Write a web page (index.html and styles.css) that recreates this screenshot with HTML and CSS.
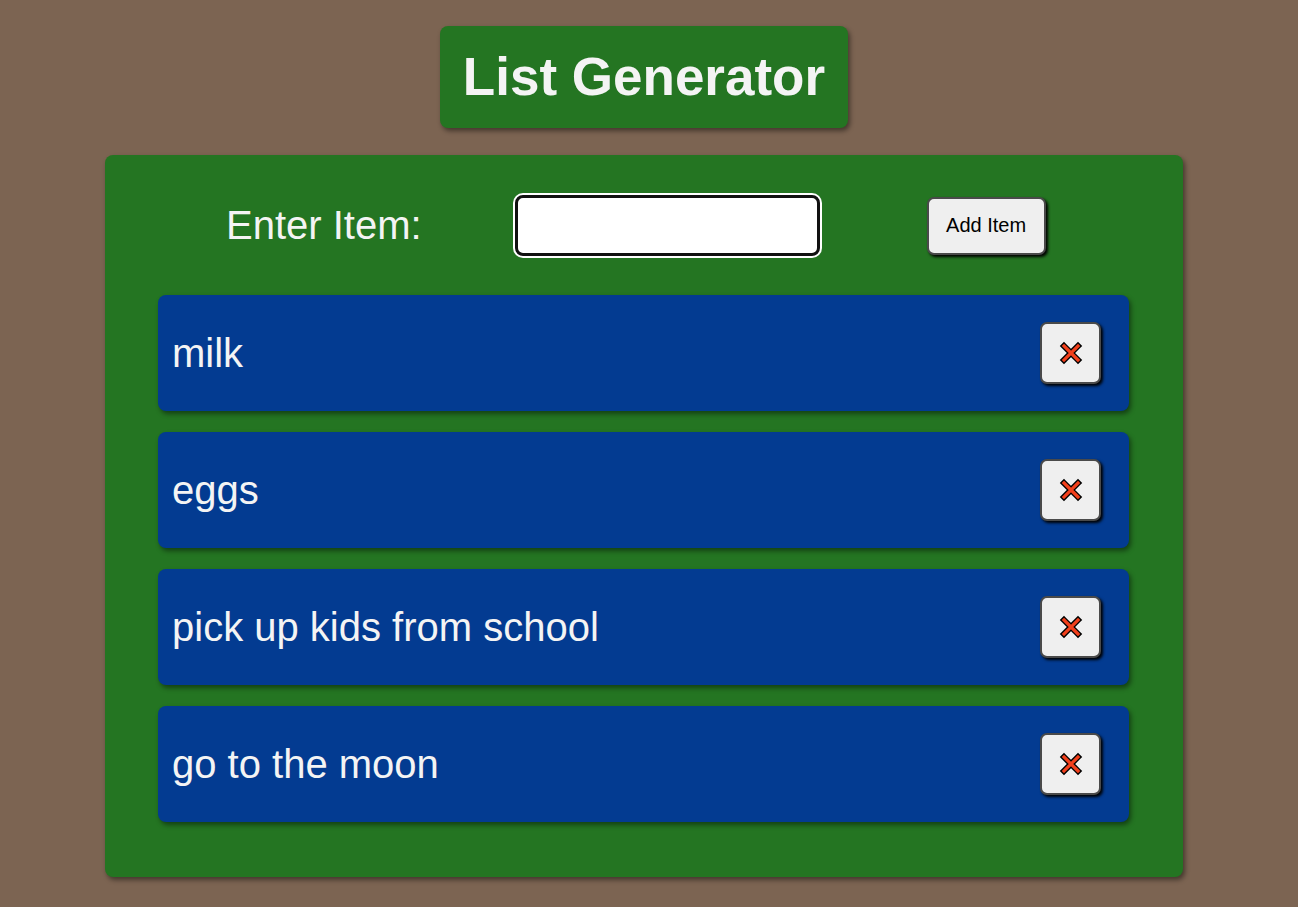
FILE: index.html
```html
<!DOCTYPE html>
<html lang="en">
<head>
    <meta charset="UTF-8">
    <meta name="viewport" content="width=device-width, initial-scale=1.0">
    <title>List Generator</title>
    <link rel="stylesheet" href="styles.css">
</head>
<body>
    <div class="page">
        <h1 class="title">List Generator</h1>
        <div class="card">
            <div class="entry-row">
                <label for="item-input" class="entry-label">Enter Item:</label>
                <input type="text" id="item-input" class="entry-input">
                <button class="add-btn" id="add-btn">Add Item</button>
            </div>
            <ul class="item-list" id="item-list">
                <li class="item"><span class="item-text">milk</span><button class="del-btn" aria-label="Delete"><svg width="24" height="24" viewBox="0 0 24 24"><path d="M5 5 L19 19 M19 5 L5 19" stroke="#000" stroke-width="6" stroke-linecap="square"/><path d="M5 5 L19 19 M19 5 L5 19" stroke="#f3401c" stroke-width="3.2" stroke-linecap="square"/></svg></button></li>
                <li class="item"><span class="item-text">eggs</span><button class="del-btn" aria-label="Delete"><svg width="24" height="24" viewBox="0 0 24 24"><path d="M5 5 L19 19 M19 5 L5 19" stroke="#000" stroke-width="6" stroke-linecap="square"/><path d="M5 5 L19 19 M19 5 L5 19" stroke="#f3401c" stroke-width="3.2" stroke-linecap="square"/></svg></button></li>
                <li class="item"><span class="item-text">pick up kids from school</span><button class="del-btn" aria-label="Delete"><svg width="24" height="24" viewBox="0 0 24 24"><path d="M5 5 L19 19 M19 5 L5 19" stroke="#000" stroke-width="6" stroke-linecap="square"/><path d="M5 5 L19 19 M19 5 L5 19" stroke="#f3401c" stroke-width="3.2" stroke-linecap="square"/></svg></button></li>
                <li class="item"><span class="item-text">go to the moon</span><button class="del-btn" aria-label="Delete"><svg width="24" height="24" viewBox="0 0 24 24"><path d="M5 5 L19 19 M19 5 L5 19" stroke="#000" stroke-width="6" stroke-linecap="square"/><path d="M5 5 L19 19 M19 5 L5 19" stroke="#f3401c" stroke-width="3.2" stroke-linecap="square"/></svg></button></li>
            </ul>
        </div>
    </div>

    <script>
        // remove an item when its X button is clicked
        document.getElementById('item-list').addEventListener('click', (e) => {
            const btn = e.target.closest('.del-btn');
            if (btn) btn.parentElement.remove();
        });
    </script>
</body>
</html>
```

FILE: styles.css
```css
body {
    margin: 0;
    padding: 0;
    background: #7c6452;
    font-family: "Liberation Sans", Arial, sans-serif;
}
.page {
    display: flex;
    flex-direction: column;
    align-items: center;
    padding: 26px 10px 30px 0;
}
.title {
    margin: 0;
    padding: 20px 23px 21px;
    background: #247522;
    color: #f4f4f4;
    font-size: 53px;
    font-weight: bold;
    line-height: 61px;
    border-radius: 8px;
    box-shadow: 2px 3px 5px rgba(0, 0, 0, 0.45);
}
.card {
    margin-top: 27px;
    width: 1078px;
    box-sizing: border-box;
    background: #247522;
    border-radius: 8px;
    box-shadow: 2px 3px 5px rgba(0, 0, 0, 0.45);
    padding: 38px 54px 55px 53px;
}
.entry-row {
    display: flex;
    align-items: center;
    padding-left: 68px;
    height: 65px;
}
.entry-label {
    color: #f4f4f4;
    font-size: 40px;
    margin-right: 93px;
}
.entry-input {
    width: 305px;
    height: 61px;
    box-sizing: border-box;
    border: 3px solid #111;
    border-radius: 8px;
    box-shadow: 0 0 0 2px #fff;
    outline: none;
    font-size: 24px;
    padding: 0 10px;
    margin-right: 107px;
}
.add-btn {
    width: 119px;
    height: 58px;
    background: #efefef;
    border: 2px solid #4a4a4a;
    border-radius: 7px;
    box-shadow: 2px 2px 3px #000;
    font-family: "Liberation Sans", Arial, sans-serif;
    font-size: 20px;
    color: #000;
    cursor: pointer;
}
.item-list {
    list-style: none;
    margin: 37px 0 0;
    padding: 0;
    display: flex;
    flex-direction: column;
    gap: 21px;
}
.item {
    display: flex;
    align-items: center;
    justify-content: space-between;
    height: 116px;
    box-sizing: border-box;
    padding: 0 28px 0 14px;
    background: #033b91;
    border-radius: 8px;
    box-shadow: 2px 3px 5px rgba(0, 0, 0, 0.45);
}
.item-text {
    color: #f4f4f4;
    font-size: 40px;
}
.del-btn {
    width: 61px;
    height: 62px;
    display: flex;
    align-items: center;
    justify-content: center;
    padding: 0;
    background: #efefef;
    border: 2px solid #4a4a4a;
    border-radius: 7px;
    box-shadow: 2px 2px 3px #000;
    cursor: pointer;
}
```
